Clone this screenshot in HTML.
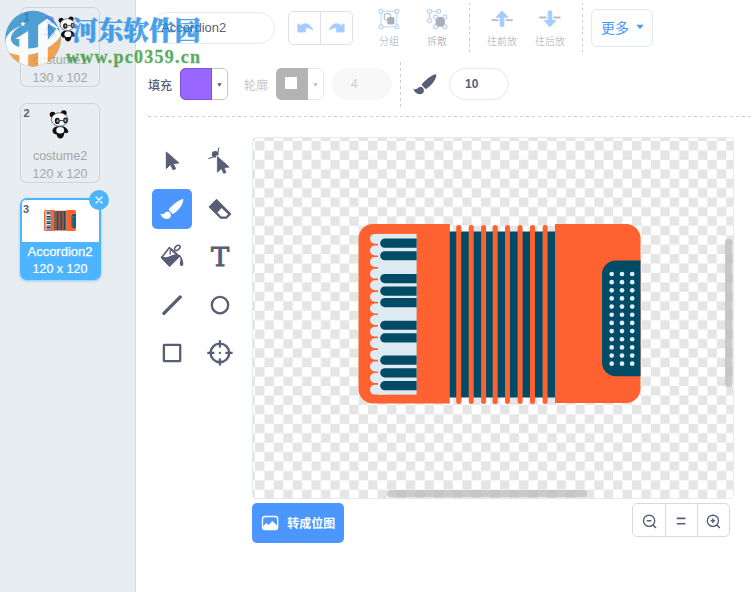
<!DOCTYPE html>
<html lang="zh-CN">
<head>
<meta charset="utf-8">
<title>Paint Editor</title>
<style>
html,body{margin:0;padding:0;}
body{width:754px;height:592px;position:relative;overflow:hidden;background:#fff;
  font-family:"Liberation Sans","Noto Sans CJK SC",sans-serif;color:#575e75;font-size:12px;}
*{box-sizing:border-box;}
.abs{position:absolute;}
/* sidebar */
#sidebar{position:absolute;left:0;top:0;width:136px;height:592px;background:#e8edf1;border-right:1px solid #d9d9d9;}
.costume{position:absolute;left:20px;width:80px;height:80px;border:1px solid #cfd2d6;border-radius:7px;text-align:center;}
.costume .num{position:absolute;left:2.6px;top:3px;font-size:11px;font-weight:bold;color:#575e75;line-height:12px;}
.costume .nm{position:absolute;left:0;right:0;top:44.2px;font-size:12.5px;line-height:16px;color:#a3a5a8;white-space:nowrap;}
.costume .sz{position:absolute;left:0;right:0;top:61.5px;font-size:12.5px;line-height:16px;color:#a3a5a8;white-space:nowrap;}
.costume.sel{border:2px solid #4db4ff;background:#4db4ff;width:81px;height:82px;border-radius:7px;overflow:visible;box-shadow:0 1px 3px rgba(77,180,255,.6);}
.costume.sel .lab{position:absolute;left:0;right:0;top:0;height:42px;background:#fff;border-radius:4px 4px 0 0;}
.costume.sel .nm,.costume.sel .sz{color:#fff;}
#closebtn{position:absolute;left:89px;top:190px;width:20px;height:20px;border-radius:50%;background:#4db4ff;}
/* top rows */
#nameinput{position:absolute;left:152px;top:12px;width:123px;height:32px;border:1px solid #e3eaf4;border-radius:16px;
  font-size:13px;line-height:30px;padding-left:8.2px;color:#575e75;}
.btngroup{position:absolute;border:1px solid #e1e1e1;border-radius:5px;background:#fff;}
.lbl10{position:absolute;font-size:10px;font-weight:300;line-height:12px;color:#a6a8b2;white-space:nowrap;text-align:center;width:40px;}
.vdash{position:absolute;width:1px;background-image:linear-gradient(to bottom,#cdcdcd 0,#cdcdcd 3px,transparent 3px,transparent 6px);background-size:1px 6px;background-repeat:repeat-y;}
#morebtn{position:absolute;left:591px;top:9px;width:62px;height:38px;border:1px solid #dfe8f5;border-radius:6px;}
#morebtn span{position:absolute;left:9px;top:9px;font-size:14px;line-height:18px;color:#4c97ff;}
.swatch{position:absolute;top:68px;width:48px;height:32px;border-radius:5px;overflow:hidden;}
.pill{position:absolute;top:68px;width:60px;height:32px;border-radius:16px;}
#hdash{position:absolute;left:148px;top:116px;width:606px;height:1px;background-image:linear-gradient(to right,#cdcdcd 0,#cdcdcd 3px,transparent 3px,transparent 6px);background-size:6px 1px;background-repeat:repeat-x;}
/* tools */
.tool{position:absolute;width:40px;height:40px;border-radius:5px;}
.tool svg{position:absolute;left:0;top:0;}
/* canvas */
#canvas{position:absolute;left:252px;top:137px;width:482px;height:362px;border:1px solid #e4eaf2;border-radius:4px;overflow:hidden;background:#fff;}
#bitmapbtn{position:absolute;left:252px;top:503px;width:92px;height:40px;background:#4c97ff;border-radius:5px;color:#fff;}
#bitmapbtn span{position:absolute;left:35.3px;top:13.4px;font-size:12px;font-weight:bold;line-height:16px;white-space:nowrap;}
#zoomgrp{position:absolute;left:632px;top:503px;width:98px;height:34px;border:1px solid #d9d9d9;border-radius:5px;}
#zoomgrp i{position:absolute;top:0;width:1px;height:32px;background:#d9d9d9;}
</style>
</head>
<body>

<!-- ============ SIDEBAR ============ -->
<div id="sidebar">
  <div class="costume" style="top:7px;">
    <div class="num">1</div>
    <div class="nm">costume1</div>
    <div class="sz">130 x 102</div>
  </div>
  <div class="costume" style="top:103px;">
    <div class="num">2</div>
    <div class="nm">costume2</div>
    <div class="sz">120 x 120</div>
  </div>
  <div class="costume sel" style="top:198px;left:19.5px;">
    <div class="lab"></div>
    <div class="num" style="left:1.6px;top:3px;">3</div>
    <div class="nm" style="top:44px;font-size:13px;-webkit-text-stroke:0.25px #fff;">Accordion2</div>
    <div class="sz" style="top:61px;-webkit-text-stroke:0.2px #fff;">120 x 120</div>
  </div>
<svg class="abs" style="left:0;top:0;" width="136" height="300" viewBox="0 0 136 300">
<defs><g id="panda">
<circle cx="8.6" cy="8.6" r="2.9" fill="#111"/><circle cx="19.8" cy="7.1" r="2.9" fill="#111"/>
<path d="M8.4 24.6 C8.8 21.5 11.5 20 16 20.2 C20.5 20 23.6 21.8 24.4 25.8 C23.5 27.6 21.5 27.4 20.6 26.6 L20 28.6 C19.6 31.2 18.4 32.6 16.4 32.6 C14.2 32.6 12.8 30.6 12.6 28.2 C11 28.8 8.6 27.6 8.4 24.6 Z" fill="#111"/>
<ellipse cx="16.2" cy="24.3" rx="3.9" ry="3.3" fill="#fafafa"/>
<ellipse cx="15.6" cy="13.5" rx="8.2" ry="6.7" fill="#fbfbfb" stroke="#3a3a3a" stroke-width="0.7"/>
<ellipse cx="13.3" cy="14.9" rx="2.5" ry="3.1" fill="#111"/><ellipse cx="21.4" cy="14.4" rx="2.2" ry="2.8" fill="#111"/>
<ellipse cx="13.6" cy="14.9" rx="1.1" ry="1.7" fill="#9a9a9a"/><ellipse cx="21.4" cy="14.4" rx="1" ry="1.6" fill="#b5b5b5"/>
<path d="M16 14.6 H19.2" stroke="#222" stroke-width="0.9"/>
<path d="M17.2 20.4 L19.2 20.6 L18.4 22.4 Z" fill="#25a7e8"/>
</g></defs>
<use href="#panda" transform="translate(44,106)"/>
<use href="#panda" transform="translate(53.6,12.8) scale(0.88)"/>
<g fill="none" stroke="#8a5cf5" stroke-width="1.1" stroke-linecap="round" stroke-linejoin="round">
<rect x="46" y="17" width="7" height="5.6" rx="2"/>
<path d="M48 19.2 h1.2 M50.4 19.2 h1.2 M49.2 22.8 L48.7 34 M44 34.4 L51 33.6 M49.2 25.6 L56.4 37.2 M49 26 L46.4 29.6"/>
</g>
<g transform="translate(44,210.1) scale(0.1135,0.1165) translate(-358.5,-224)"><g>
<rect x="448" y="231.5" width="108" height="166" fill="#004c66"/>
<rect x="456.2" y="225" width="5" height="179" rx="2.5" fill="#ff6130"/>
<rect x="468.7" y="225" width="5" height="179" rx="2.5" fill="#ff6130"/>
<rect x="481.1" y="225" width="5" height="179" rx="2.5" fill="#ff6130"/>
<rect x="492.7" y="225" width="5" height="179" rx="2.5" fill="#ff6130"/>
<rect x="505.0" y="225" width="5" height="179" rx="2.5" fill="#ff6130"/>
<rect x="517.6" y="225" width="5" height="179" rx="2.5" fill="#ff6130"/>
<rect x="530.0" y="225" width="5" height="179" rx="2.5" fill="#ff6130"/>
<rect x="542.6" y="225" width="5" height="179" rx="2.5" fill="#ff6130"/>
<path d="M373 224 H449.8 V403.5 H373 A14.5 14.5 0 0 1 358.5 389 V238.5 A14.5 14.5 0 0 1 373 224 Z" fill="#ff6130"/>
<path d="M555 224 H626 A14.5 14.5 0 0 1 640.5 238.5 V388.5 A14.5 14.5 0 0 1 626 403 H555 Z" fill="#ff6130"/>
<path d="M640.5 260.4 H616 A14 14 0 0 0 602 274.4 V362.3 A14 14 0 0 0 616 376.3 H640.5 Z" fill="#004c66"/>
<circle cx="611.7" cy="274.00" r="2.35" fill="#dfebf3"/>
<circle cx="611.7" cy="282.15" r="2.35" fill="#dfebf3"/>
<circle cx="611.7" cy="290.31" r="2.35" fill="#dfebf3"/>
<circle cx="611.7" cy="298.46" r="2.35" fill="#dfebf3"/>
<circle cx="611.7" cy="306.62" r="2.35" fill="#dfebf3"/>
<circle cx="611.7" cy="314.77" r="2.35" fill="#dfebf3"/>
<circle cx="611.7" cy="322.93" r="2.35" fill="#dfebf3"/>
<circle cx="611.7" cy="331.08" r="2.35" fill="#dfebf3"/>
<circle cx="611.7" cy="339.24" r="2.35" fill="#dfebf3"/>
<circle cx="611.7" cy="347.39" r="2.35" fill="#dfebf3"/>
<circle cx="611.7" cy="355.55" r="2.35" fill="#dfebf3"/>
<circle cx="611.7" cy="363.70" r="2.35" fill="#dfebf3"/>
<circle cx="622" cy="274.00" r="2.35" fill="#dfebf3"/>
<circle cx="622" cy="282.15" r="2.35" fill="#dfebf3"/>
<circle cx="622" cy="290.31" r="2.35" fill="#dfebf3"/>
<circle cx="622" cy="298.46" r="2.35" fill="#dfebf3"/>
<circle cx="622" cy="306.62" r="2.35" fill="#dfebf3"/>
<circle cx="622" cy="314.77" r="2.35" fill="#dfebf3"/>
<circle cx="622" cy="322.93" r="2.35" fill="#dfebf3"/>
<circle cx="622" cy="331.08" r="2.35" fill="#dfebf3"/>
<circle cx="622" cy="339.24" r="2.35" fill="#dfebf3"/>
<circle cx="622" cy="347.39" r="2.35" fill="#dfebf3"/>
<circle cx="622" cy="355.55" r="2.35" fill="#dfebf3"/>
<circle cx="622" cy="363.70" r="2.35" fill="#dfebf3"/>
<circle cx="632.2" cy="274.00" r="2.35" fill="#dfebf3"/>
<circle cx="632.2" cy="282.15" r="2.35" fill="#dfebf3"/>
<circle cx="632.2" cy="290.31" r="2.35" fill="#dfebf3"/>
<circle cx="632.2" cy="298.46" r="2.35" fill="#dfebf3"/>
<circle cx="632.2" cy="306.62" r="2.35" fill="#dfebf3"/>
<circle cx="632.2" cy="314.77" r="2.35" fill="#dfebf3"/>
<circle cx="632.2" cy="322.93" r="2.35" fill="#dfebf3"/>
<circle cx="632.2" cy="331.08" r="2.35" fill="#dfebf3"/>
<circle cx="632.2" cy="339.24" r="2.35" fill="#dfebf3"/>
<circle cx="632.2" cy="347.39" r="2.35" fill="#dfebf3"/>
<circle cx="632.2" cy="355.55" r="2.35" fill="#dfebf3"/>
<circle cx="632.2" cy="363.70" r="2.35" fill="#dfebf3"/>
<rect x="378" y="233.9" width="38.6" height="160.7" fill="#dfebf3"/>
<rect x="370" y="233.90" width="20" height="9.9" rx="4.95" fill="#dfebf3"/>
<rect x="370" y="245.50" width="20" height="9.9" rx="4.95" fill="#dfebf3"/>
<rect x="370" y="257.10" width="20" height="9.9" rx="4.95" fill="#dfebf3"/>
<rect x="370" y="268.70" width="20" height="9.9" rx="4.95" fill="#dfebf3"/>
<rect x="370" y="280.30" width="20" height="9.9" rx="4.95" fill="#dfebf3"/>
<rect x="370" y="291.90" width="20" height="9.9" rx="4.95" fill="#dfebf3"/>
<rect x="370" y="303.50" width="20" height="9.9" rx="4.95" fill="#dfebf3"/>
<rect x="370" y="315.10" width="20" height="9.9" rx="4.95" fill="#dfebf3"/>
<rect x="370" y="326.70" width="20" height="9.9" rx="4.95" fill="#dfebf3"/>
<rect x="370" y="338.30" width="20" height="9.9" rx="4.95" fill="#dfebf3"/>
<rect x="370" y="349.90" width="20" height="9.9" rx="4.95" fill="#dfebf3"/>
<rect x="370" y="361.50" width="20" height="9.9" rx="4.95" fill="#dfebf3"/>
<rect x="370" y="373.10" width="20" height="9.9" rx="4.95" fill="#dfebf3"/>
<rect x="370" y="384.70" width="20" height="9.9" rx="4.95" fill="#dfebf3"/>
<path d="M416.6 238.60 H384.8 A4.6 4.6 0 0 0 384.8 247.80 H416.6 Z" fill="#004c66"/>
<path d="M416.6 251.15 H384.8 A4.6 4.6 0 0 0 384.8 260.35 H416.6 Z" fill="#004c66"/>
<path d="M416.6 274.00 H384.8 A4.6 4.6 0 0 0 384.8 283.20 H416.6 Z" fill="#004c66"/>
<path d="M416.6 286.45 H384.8 A4.6 4.6 0 0 0 384.8 295.65 H416.6 Z" fill="#004c66"/>
<path d="M416.6 298.00 H384.8 A4.6 4.6 0 0 0 384.8 307.20 H416.6 Z" fill="#004c66"/>
<path d="M416.6 320.65 H384.8 A4.6 4.6 0 0 0 384.8 329.85 H416.6 Z" fill="#004c66"/>
<path d="M416.6 333.30 H384.8 A4.6 4.6 0 0 0 384.8 342.50 H416.6 Z" fill="#004c66"/>
<path d="M416.6 355.55 H384.8 A4.6 4.6 0 0 0 384.8 364.75 H416.6 Z" fill="#004c66"/>
<path d="M416.6 368.25 H384.8 A4.6 4.6 0 0 0 384.8 377.45 H416.6 Z" fill="#004c66"/>
<path d="M416.6 381.05 H384.8 A4.6 4.6 0 0 0 384.8 390.25 H416.6 Z" fill="#004c66"/>
</g></g>
</svg>
  <div id="closebtn">
    <svg width="20" height="20" viewBox="0 0 20 20"><path d="M7 7 L13 13 M13 7 L7 13" stroke="#fff" stroke-width="1.3" stroke-linecap="round"/></svg>
  </div>
</div>

<!-- ============ TOP ROW 1 ============ -->
<div id="nameinput">Accordion2</div>

<div class="btngroup" style="left:288px;top:11px;width:65px;height:34px;">
  <div class="abs" style="left:31px;top:0;width:1px;height:32px;background:#e1e1e1;"></div>
</div>

<svg class="abs" style="left:297px;top:22px;" width="17" height="12" viewBox="0 0 17 12"><path d="M0.9 1.7 L3.6 3.6 C8.6 -0.4 14.2 2.8 15.7 8 C13.4 6.2 10.8 5.5 8.4 5.9 V10 H0.9 Z" fill="#a6cbff" stroke="#a6cbff" stroke-width="0.8" stroke-linejoin="round"/></svg>
<svg class="abs" style="left:328px;top:22px;" width="17" height="12" viewBox="0 0 17 12"><g transform="translate(17,0) scale(-1,1)"><path d="M0.9 1.7 L3.6 3.6 C8.6 -0.4 14.2 2.8 15.7 8 C13.4 6.2 10.8 5.5 8.4 5.9 V10 H0.9 Z" fill="#a6cbff" stroke="#a6cbff" stroke-width="0.8" stroke-linejoin="round"/></g></svg>
<svg class="abs" style="left:377px;top:7px;" width="24" height="24" viewBox="377 7 24 24">
<rect x="381" y="11.3" width="15.8" height="15.5" fill="none" stroke="#b9d5ff" stroke-width="1"/>
<rect x="384.3" y="13.7" width="6.2" height="6.2" rx="1.6" fill="#fff" stroke="#abaeba" stroke-width="1"/>
<rect x="387.2" y="17" width="7.3" height="7.5" rx="1.8" fill="#abaeba"/>
<g fill="#fff" stroke="#a6cbff" stroke-width="1"><rect x="379.2" y="9.5" width="3.6" height="3.6" rx="0.5"/><rect x="395.0" y="9.5" width="3.6" height="3.6" rx="0.5"/><rect x="379.2" y="25.0" width="3.6" height="3.6" rx="0.5"/><rect x="395.0" y="25.0" width="3.6" height="3.6" rx="0.5"/></g>
</svg>
<svg class="abs" style="left:425px;top:7px;" width="24" height="24" viewBox="425 7 24 24">
<path d="M429.4 20.6 V11.3 H438.7" fill="none" stroke="#c9cad2" stroke-width="1"/>
<rect x="435.6" y="17" width="9.3" height="9.8" rx="1" fill="#abaeba"/>
<g fill="#fff" stroke="#a6cbff" stroke-width="1"><rect x="427.6" y="9.5" width="3.6" height="3.6" rx="0.5"/><rect x="436.9" y="9.5" width="3.6" height="3.6" rx="0.5"/><rect x="427.6" y="18.8" width="3.6" height="3.6" rx="0.5"/>
<rect x="433.8" y="15.2" width="3.6" height="3.6" rx="0.5"/><rect x="443.1" y="15.2" width="3.6" height="3.6" rx="0.5"/><rect x="433.8" y="25.0" width="3.6" height="3.6" rx="0.5"/><rect x="443.1" y="25.0" width="3.6" height="3.6" rx="0.5"/></g>
</svg>
<svg class="abs" style="left:490px;top:8px;" width="24" height="22" viewBox="490 8 24 22">
<path d="M492 20.2 H497.8 M506.3 20.2 H512" stroke="#b9bbc7" stroke-width="1.8" stroke-linecap="round"/>
<path d="M502 10.8 L508 17.3 H503.9 V25 A1.9 1.9 0 0 1 500.1 25 V17.3 H496 Z" fill="#a6cbff" stroke="#a6cbff" stroke-width="0.8" stroke-linejoin="round"/>
</svg>
<svg class="abs" style="left:538px;top:8px;" width="24" height="22" viewBox="538 8 24 22">
<path d="M540 17.5 H545.8 M554.2 17.5 H559.8" stroke="#b9bbc7" stroke-width="1.8" stroke-linecap="round"/>
<path d="M550 26.9 L556 20.4 H551.9 V12.6 A1.9 1.9 0 0 0 548.1 12.6 V20.4 H544 Z" fill="#a6cbff" stroke="#a6cbff" stroke-width="0.8" stroke-linejoin="round"/>
</svg>
<div class="lbl10" style="left:369px;top:35.8px;">分组</div>
<div class="lbl10" style="left:417px;top:35.8px;">拆散</div>
<div class="vdash" style="left:469px;top:3px;height:49px;background-position:0 -1px;"></div>
<div class="lbl10" style="left:482px;top:35.8px;">往前放</div>
<div class="lbl10" style="left:530px;top:35.8px;">往后放</div>
<div class="vdash" style="left:582px;top:3px;height:49px;background-position:0 -1px;"></div>
<div id="morebtn"><span>更多</span>
  <svg class="abs" style="left:44.3px;top:13.6px;" width="8" height="6" viewBox="0 0 8 6"><path d="M1 1.2 H7 L4 4.6 Z" fill="#4c97ff" stroke="#4c97ff" stroke-width="1" stroke-linejoin="round"/></svg>
</div>

<!-- ============ TOP ROW 2 ============ -->
<div class="abs" style="left:148px;top:77.5px;font-size:12px;font-weight:500;line-height:16px;color:#575e75;">填充</div>
<div class="swatch" style="left:180px;">
  <div class="abs" style="left:0;top:0;width:48px;height:32px;border:1px solid #c6c6c6;border-radius:5px;background:#fff;"></div>
  <div class="abs" style="left:0;top:0;width:32px;height:32px;background:#9966ff;border:1px solid #7b52d6;border-right-width:0.5px;border-radius:5px 0 0 5px;"></div>
  <svg class="abs" style="left:37.4px;top:14.6px;" width="5" height="4" viewBox="0 0 5 4"><path d="M0.3 0.3 H4.7 L2.5 3.8 Z" fill="#575e75"/></svg>
</div>
<div class="abs" style="left:244px;top:77.5px;font-size:12px;line-height:16px;color:#c4c5ca;">轮廓</div>
<div class="swatch" style="left:276px;">
  <div class="abs" style="left:0;top:0;width:48px;height:32px;border:1px solid #e8e8e8;border-radius:5px;background:#fff;"></div>
  <div class="abs" style="left:0;top:0;width:32px;height:32px;background:#b3b3b3;border-radius:5px 0 0 5px;"></div>
  <div class="abs" style="left:9px;top:9px;width:12px;height:12px;background:#fff;"></div>
  <svg class="abs" style="left:37.4px;top:14.6px;" width="5" height="4" viewBox="0 0 5 4"><path d="M0.3 0.3 H4.7 L2.5 3.8 Z" fill="#b5b8c6"/></svg>
</div>
<div class="pill" style="left:332px;background:#f8f8f8;"><span class="abs" style="left:19px;top:8px;font-size:12px;line-height:16px;color:#c9cbd6;">4</span></div>
<div class="vdash" style="left:400px;top:61px;height:46px;background-position:0 1px;"></div>
<svg class="abs" style="left:413px;top:73.8px;" width="24.5" height="21" viewBox="0 0 24.5 21"><path d="M23.2 0.4 C23.6 2 22.6 4.5 21.4 6.6 C19.6 9.8 16.4 13 13 15 C12.6 15.2 12.3 15 12 14.6 L8.9 11.2 C8.6 10.8 8.7 10.4 9 10.1 C12 6.6 17 2.4 21.4 0.6 C22.2 0.3 23 0 23.2 0.4 Z M0.4 14.7 C1.6 15.6 3.4 15.4 4.4 14.6 C5.4 13.6 6.6 12.8 7.8 12.8 C9.2 12.9 10.4 14.2 10.8 15.8 C11.2 17.4 10.6 18.8 9.4 19.5 C7.6 20.5 5.4 20.3 3.6 19.2 C2 18.2 0.8 16.6 0.4 14.7 Z" fill="#575e75"/></svg>
<div class="pill" style="left:449px;border:1px solid #e0e8f3;"><span class="abs" style="left:15px;top:7px;font-size:12px;font-weight:bold;line-height:16px;color:#575e75;">10</span></div>

<div id="hdash"></div>


<!-- ============ TOOLS ============ -->
<div class="tool" style="left:152px;top:141px;"><svg width="40" height="40" viewBox="0 0 40 40"><path d="M14.3 11 L26.8 21.9 L21.2 22.6 L23.6 27.7 L21.1 28.8 L18.6 23.5 L14.3 27.5 Z" fill="#575e75" stroke="#575e75" stroke-width="1" stroke-linejoin="round"/></svg></div>
<div class="tool" style="left:200px;top:141px;"><svg width="40" height="40" viewBox="0 0 40 40">
<path d="M18.8 7 L17.6 13 M8.8 17.5 L14 15.7" stroke="#575e75" stroke-width="1.1" stroke-linecap="round"/>
<circle cx="15.2" cy="13.2" r="3.3" fill="#575e75"/>
<path d="M17.4 15.6 L29.2 26 L24 26.7 L26 31.4 L23.7 32.4 L21.4 27.6 L17.4 31.2 Z" fill="#575e75" stroke="#fff" stroke-width="2.6" stroke-linejoin="round"/>
<path d="M17.4 15.6 L29.2 26 L24 26.7 L26 31.4 L23.7 32.4 L21.4 27.6 L17.4 31.2 Z" fill="#575e75" stroke="#575e75" stroke-width="0.8" stroke-linejoin="round"/>
</svg></div>
<div class="tool" style="left:152px;top:189px;background:#4c97ff;"><svg width="40" height="40" viewBox="0 0 40 40"><g transform="translate(8,9.8)"><path d="M23.2 0.4 C23.6 2 22.6 4.5 21.4 6.6 C19.6 9.8 16.4 13 13 15 C12.6 15.2 12.3 15 12 14.6 L8.9 11.2 C8.6 10.8 8.7 10.4 9 10.1 C12 6.6 17 2.4 21.4 0.6 C22.2 0.3 23 0 23.2 0.4 Z M0.4 14.7 C1.6 15.6 3.4 15.4 4.4 14.6 C5.4 13.6 6.6 12.8 7.8 12.8 C9.2 12.9 10.4 14.2 10.8 15.8 C11.2 17.4 10.6 18.8 9.4 19.5 C7.6 20.5 5.4 20.3 3.6 19.2 C2 18.2 0.8 16.6 0.4 14.7 Z" fill="#fff"/></g></svg></div>
<div class="tool" style="left:200px;top:189px;"><svg width="40" height="40" viewBox="0 0 40 40">
<path d="M16.55 10.6 L30.6 25 L26.5 29.2 H20.8 L9.3 17.9 Z" fill="#575e75" stroke="#575e75" stroke-width="1.2" stroke-linejoin="round"/>
<path d="M21.6 18.9 L28 25.3 L26 27.4 H21.3 L17.4 23.5 Z" fill="#fff"/></svg></div>
<div class="tool" style="left:152px;top:237px;"><svg width="40" height="40" viewBox="0 0 40 40">
<path d="M17.4 10.6 L26.6 19.4 L17.6 28.6 L9.7 20.5 Z" fill="none" stroke="#575e75" stroke-width="1.6" stroke-linejoin="round"/>
<path d="M9.8 20.2 C11.6 21.2 13.6 21.4 15.6 21 C18.6 20.4 20.6 18.6 23 18.5 C24.4 18.5 25.6 19 26.6 19.6 L17.6 28.6 Z" fill="#575e75" stroke="#575e75" stroke-width="2" stroke-linejoin="round"/>
<ellipse cx="25.3" cy="10.9" rx="3.2" ry="2" transform="rotate(-40 25.3 10.9)" fill="none" stroke="#575e75" stroke-width="1.5"/>
<path d="M19.4 12.4 L27 19.2" stroke="#575e75" stroke-width="1.8" stroke-linecap="round"/>
<path d="M18.2 13.4 V17" stroke="#575e75" stroke-width="1.3" stroke-linecap="round"/>
<path d="M26.6 18.4 C28.6 19.6 28.8 22 28 25.2 C27.4 27.6 28.2 29 29.6 29 C31 29 31.6 27.6 31.2 25.4 C30.8 22.6 29.6 20 27.8 17.8 Z" fill="#575e75"/>
</svg></div>
<div class="tool" style="left:200px;top:237px;"><span class="abs" style="left:10.6px;top:4.3px;font-family:'DejaVu Serif','Liberation Serif',serif;font-weight:normal;font-size:26px;line-height:32px;color:#575e75;-webkit-text-stroke:0.9px #575e75;display:inline-block;transform-origin:0 0;transform:scaleX(1.05);">T</span></div>
<div class="tool" style="left:152px;top:285px;"><svg width="40" height="40" viewBox="0 0 40 40"><path d="M11.9 28.3 L28.3 11.9" stroke="#575e75" stroke-width="3.3" stroke-linecap="round"/></svg></div>
<div class="tool" style="left:200px;top:285px;"><svg width="40" height="40" viewBox="0 0 40 40"><circle cx="20" cy="20.1" r="8.2" fill="none" stroke="#575e75" stroke-width="2.3"/></svg></div>
<div class="tool" style="left:152px;top:333px;"><svg width="40" height="40" viewBox="0 0 40 40"><rect x="11.9" y="11.9" width="16.3" height="16.2" rx="0.3" fill="none" stroke="#575e75" stroke-width="2.3"/></svg></div>
<div class="tool" style="left:200px;top:333px;"><svg width="40" height="40" viewBox="0 0 40 40"><circle cx="19.9" cy="19.9" r="9.3" fill="none" stroke="#575e75" stroke-width="2.4"/><path d="M7.3 19.9 H14.4 M25.4 19.9 H32.6 M19.9 7.3 V14.4 M19.9 25.4 V32.6" stroke="#575e75" stroke-width="2.3" stroke-linecap="butt"/><rect x="18.9" y="18.9" width="2" height="2" fill="#575e75"/></svg></div>

<!-- ============ CANVAS ============ -->
<div id="canvas">
<svg class="abs" style="left:0;top:0;" width="480" height="360" viewBox="253 138 480 360">
<defs><pattern id="chk" x="255" y="141" width="18.85" height="18.85" patternUnits="userSpaceOnUse"><rect x="0" y="0" width="9.425" height="9.425" fill="#e5e5e5"/><rect x="9.425" y="9.425" width="9.425" height="9.425" fill="#e5e5e5"/></pattern></defs>
<rect x="253" y="138" width="480" height="360" fill="url(#chk)"/>
<g>
<rect x="448" y="231.5" width="108" height="166" fill="#004c66"/>
<rect x="456.2" y="225" width="5" height="179" rx="2.5" fill="#ff6130"/>
<rect x="468.7" y="225" width="5" height="179" rx="2.5" fill="#ff6130"/>
<rect x="481.1" y="225" width="5" height="179" rx="2.5" fill="#ff6130"/>
<rect x="492.7" y="225" width="5" height="179" rx="2.5" fill="#ff6130"/>
<rect x="505.0" y="225" width="5" height="179" rx="2.5" fill="#ff6130"/>
<rect x="517.6" y="225" width="5" height="179" rx="2.5" fill="#ff6130"/>
<rect x="530.0" y="225" width="5" height="179" rx="2.5" fill="#ff6130"/>
<rect x="542.6" y="225" width="5" height="179" rx="2.5" fill="#ff6130"/>
<path d="M373 224 H449.8 V403.5 H373 A14.5 14.5 0 0 1 358.5 389 V238.5 A14.5 14.5 0 0 1 373 224 Z" fill="#ff6130"/>
<path d="M555 224 H626 A14.5 14.5 0 0 1 640.5 238.5 V388.5 A14.5 14.5 0 0 1 626 403 H555 Z" fill="#ff6130"/>
<path d="M640.5 260.4 H616 A14 14 0 0 0 602 274.4 V362.3 A14 14 0 0 0 616 376.3 H640.5 Z" fill="#004c66"/>
<circle cx="611.7" cy="274.00" r="2.35" fill="#dfebf3"/>
<circle cx="611.7" cy="282.15" r="2.35" fill="#dfebf3"/>
<circle cx="611.7" cy="290.31" r="2.35" fill="#dfebf3"/>
<circle cx="611.7" cy="298.46" r="2.35" fill="#dfebf3"/>
<circle cx="611.7" cy="306.62" r="2.35" fill="#dfebf3"/>
<circle cx="611.7" cy="314.77" r="2.35" fill="#dfebf3"/>
<circle cx="611.7" cy="322.93" r="2.35" fill="#dfebf3"/>
<circle cx="611.7" cy="331.08" r="2.35" fill="#dfebf3"/>
<circle cx="611.7" cy="339.24" r="2.35" fill="#dfebf3"/>
<circle cx="611.7" cy="347.39" r="2.35" fill="#dfebf3"/>
<circle cx="611.7" cy="355.55" r="2.35" fill="#dfebf3"/>
<circle cx="611.7" cy="363.70" r="2.35" fill="#dfebf3"/>
<circle cx="622" cy="274.00" r="2.35" fill="#dfebf3"/>
<circle cx="622" cy="282.15" r="2.35" fill="#dfebf3"/>
<circle cx="622" cy="290.31" r="2.35" fill="#dfebf3"/>
<circle cx="622" cy="298.46" r="2.35" fill="#dfebf3"/>
<circle cx="622" cy="306.62" r="2.35" fill="#dfebf3"/>
<circle cx="622" cy="314.77" r="2.35" fill="#dfebf3"/>
<circle cx="622" cy="322.93" r="2.35" fill="#dfebf3"/>
<circle cx="622" cy="331.08" r="2.35" fill="#dfebf3"/>
<circle cx="622" cy="339.24" r="2.35" fill="#dfebf3"/>
<circle cx="622" cy="347.39" r="2.35" fill="#dfebf3"/>
<circle cx="622" cy="355.55" r="2.35" fill="#dfebf3"/>
<circle cx="622" cy="363.70" r="2.35" fill="#dfebf3"/>
<circle cx="632.2" cy="274.00" r="2.35" fill="#dfebf3"/>
<circle cx="632.2" cy="282.15" r="2.35" fill="#dfebf3"/>
<circle cx="632.2" cy="290.31" r="2.35" fill="#dfebf3"/>
<circle cx="632.2" cy="298.46" r="2.35" fill="#dfebf3"/>
<circle cx="632.2" cy="306.62" r="2.35" fill="#dfebf3"/>
<circle cx="632.2" cy="314.77" r="2.35" fill="#dfebf3"/>
<circle cx="632.2" cy="322.93" r="2.35" fill="#dfebf3"/>
<circle cx="632.2" cy="331.08" r="2.35" fill="#dfebf3"/>
<circle cx="632.2" cy="339.24" r="2.35" fill="#dfebf3"/>
<circle cx="632.2" cy="347.39" r="2.35" fill="#dfebf3"/>
<circle cx="632.2" cy="355.55" r="2.35" fill="#dfebf3"/>
<circle cx="632.2" cy="363.70" r="2.35" fill="#dfebf3"/>
<rect x="378" y="233.9" width="38.6" height="160.7" fill="#dfebf3"/>
<rect x="370" y="233.90" width="20" height="9.9" rx="4.95" fill="#dfebf3"/>
<rect x="370" y="245.50" width="20" height="9.9" rx="4.95" fill="#dfebf3"/>
<rect x="370" y="257.10" width="20" height="9.9" rx="4.95" fill="#dfebf3"/>
<rect x="370" y="268.70" width="20" height="9.9" rx="4.95" fill="#dfebf3"/>
<rect x="370" y="280.30" width="20" height="9.9" rx="4.95" fill="#dfebf3"/>
<rect x="370" y="291.90" width="20" height="9.9" rx="4.95" fill="#dfebf3"/>
<rect x="370" y="303.50" width="20" height="9.9" rx="4.95" fill="#dfebf3"/>
<rect x="370" y="315.10" width="20" height="9.9" rx="4.95" fill="#dfebf3"/>
<rect x="370" y="326.70" width="20" height="9.9" rx="4.95" fill="#dfebf3"/>
<rect x="370" y="338.30" width="20" height="9.9" rx="4.95" fill="#dfebf3"/>
<rect x="370" y="349.90" width="20" height="9.9" rx="4.95" fill="#dfebf3"/>
<rect x="370" y="361.50" width="20" height="9.9" rx="4.95" fill="#dfebf3"/>
<rect x="370" y="373.10" width="20" height="9.9" rx="4.95" fill="#dfebf3"/>
<rect x="370" y="384.70" width="20" height="9.9" rx="4.95" fill="#dfebf3"/>
<path d="M416.6 238.60 H384.8 A4.6 4.6 0 0 0 384.8 247.80 H416.6 Z" fill="#004c66"/>
<path d="M416.6 251.15 H384.8 A4.6 4.6 0 0 0 384.8 260.35 H416.6 Z" fill="#004c66"/>
<path d="M416.6 274.00 H384.8 A4.6 4.6 0 0 0 384.8 283.20 H416.6 Z" fill="#004c66"/>
<path d="M416.6 286.45 H384.8 A4.6 4.6 0 0 0 384.8 295.65 H416.6 Z" fill="#004c66"/>
<path d="M416.6 298.00 H384.8 A4.6 4.6 0 0 0 384.8 307.20 H416.6 Z" fill="#004c66"/>
<path d="M416.6 320.65 H384.8 A4.6 4.6 0 0 0 384.8 329.85 H416.6 Z" fill="#004c66"/>
<path d="M416.6 333.30 H384.8 A4.6 4.6 0 0 0 384.8 342.50 H416.6 Z" fill="#004c66"/>
<path d="M416.6 355.55 H384.8 A4.6 4.6 0 0 0 384.8 364.75 H416.6 Z" fill="#004c66"/>
<path d="M416.6 368.25 H384.8 A4.6 4.6 0 0 0 384.8 377.45 H416.6 Z" fill="#004c66"/>
<path d="M416.6 381.05 H384.8 A4.6 4.6 0 0 0 384.8 390.25 H416.6 Z" fill="#004c66"/>
</g>
<rect x="725" y="239" width="7.5" height="148" rx="3.7" fill="#bdbdbd" fill-opacity="0.8"/>
<rect x="387" y="490" width="200" height="7.5" rx="3.7" fill="#bdbdbd" fill-opacity="0.8"/>
</svg>
</div>

<!-- ============ BOTTOM ============ -->
<div id="bitmapbtn"><svg class="abs" style="left:9px;top:12px;" width="18" height="16" viewBox="261 515 18 16"><rect x="262.5" y="516.5" width="15.2" height="13" rx="2.6" fill="none" stroke="#fff" stroke-width="1.3"/><path d="M262.6 527 L266.3 523 L268.5 525.1 L272.4 521 L277.6 526 V527.6 A2 2 0 0 1 275.5 529.6 H264.6 A2 2 0 0 1 262.6 527.6 Z" fill="#fff"/></svg><span>转成位图</span></div>
<div id="zoomgrp"><svg class="abs" style="left:0;top:0;" width="96" height="32" viewBox="633 504 96 32" fill="none" stroke="#575e75" stroke-linecap="round">
<circle cx="649.1" cy="520.8" r="5.6" stroke-width="1.4"/><path d="M653.3 525.2 L655.6 527.5" stroke-width="1.6"/><path d="M647.4 520.8 H650.8" stroke-width="1.5"/>
<path d="M677.4 518.4 H684.8 M677.4 523.7 H684.8" stroke-width="1.6"/>
<circle cx="712.9" cy="520.8" r="5.6" stroke-width="1.4"/><path d="M717.1 525.2 L719.4 527.5" stroke-width="1.6"/><path d="M711.2 520.8 H714.6 M712.9 519.1 V522.5" stroke-width="1.5"/>
</svg><i style="left:32px;"></i><i style="left:64px;"></i></div>


<!-- ============ WATERMARK ============ -->
<div id="wm" class="abs" style="left:0;top:0;width:210px;height:75px;opacity:.78;pointer-events:none;">
<svg class="abs" style="left:0;top:0;" width="70" height="75" viewBox="0 0 70 75">
<defs><clipPath id="wmc"><circle cx="33" cy="38.6" r="27.8"/></clipPath></defs>
<g clip-path="url(#wmc)">
<rect x="0" y="0" width="70" height="75" fill="#258acb"/>
<path d="M6 50 C20 56 35 56.5 43.9 50.5 C52 45.5 58 40 61.5 35 L64 72 L0 72 Z" fill="#f28d23"/>
<path d="M21.6 25.6 C12 29 4.6 36 5.6 43 C6 47 7 50 8.6 52.4 C16 55.6 22 56 28.2 54.8 C34 54 39.5 52.6 43.9 50.2 C51 46.4 57.6 41 61.2 35.2 C60.6 32 58.6 30 56.5 29 C54.6 33.4 51.6 37.4 48 40.6 C45.2 43.2 42 45.4 38.6 46.8 C35.4 48 31.6 48.5 28.2 48.4 C24.4 48.3 20.8 47.8 17.7 46.6 C14.2 45.2 11.4 42.4 10.9 39.4 C10.6 34.4 14.6 29.4 21.6 25.6 Z" fill="#ffffff"/>
<path d="M15.1 38.9 L28.2 31.1 V66.6 H19.3 V38.9 Z" fill="#ffffff"/>
<path d="M38.1 25.3 L47 18.5 L58 27.4 L56.5 30 L47.8 41.5 V66.6 H38.1 Z" fill="#ffffff"/>
<path d="M47.8 23.4 L56.6 28.6 L47.8 39.9 Z" fill="#258acb"/>
<path d="M22.9 21.3 l0.75 1.75 1.9 0.17 -1.45 1.25 0.45 1.85 -1.65 -1 -1.65 1 0.45 -1.85 -1.45 -1.25 1.9 -0.17 Z" fill="#ffffff"/>
</g>
</svg>
<div class="abs" style="left:72px;top:14.7px;font-family:'Liberation Serif','Noto Serif CJK SC',serif;font-weight:900;font-size:25.7px;line-height:34px;color:#1789e5;white-space:nowrap;transform-origin:0 50%;transform:scaleY(1.0);-webkit-text-stroke:0.5px #1789e5;">河东软件园</div>
<div class="abs" style="left:66px;top:45px;font-family:'Liberation Serif',serif;font-weight:bold;font-size:18px;line-height:24px;letter-spacing:1.25px;color:#319730;-webkit-text-stroke:0.3px #319730;white-space:nowrap;">www.pc0359.cn</div>
</div>

</body>
</html>
